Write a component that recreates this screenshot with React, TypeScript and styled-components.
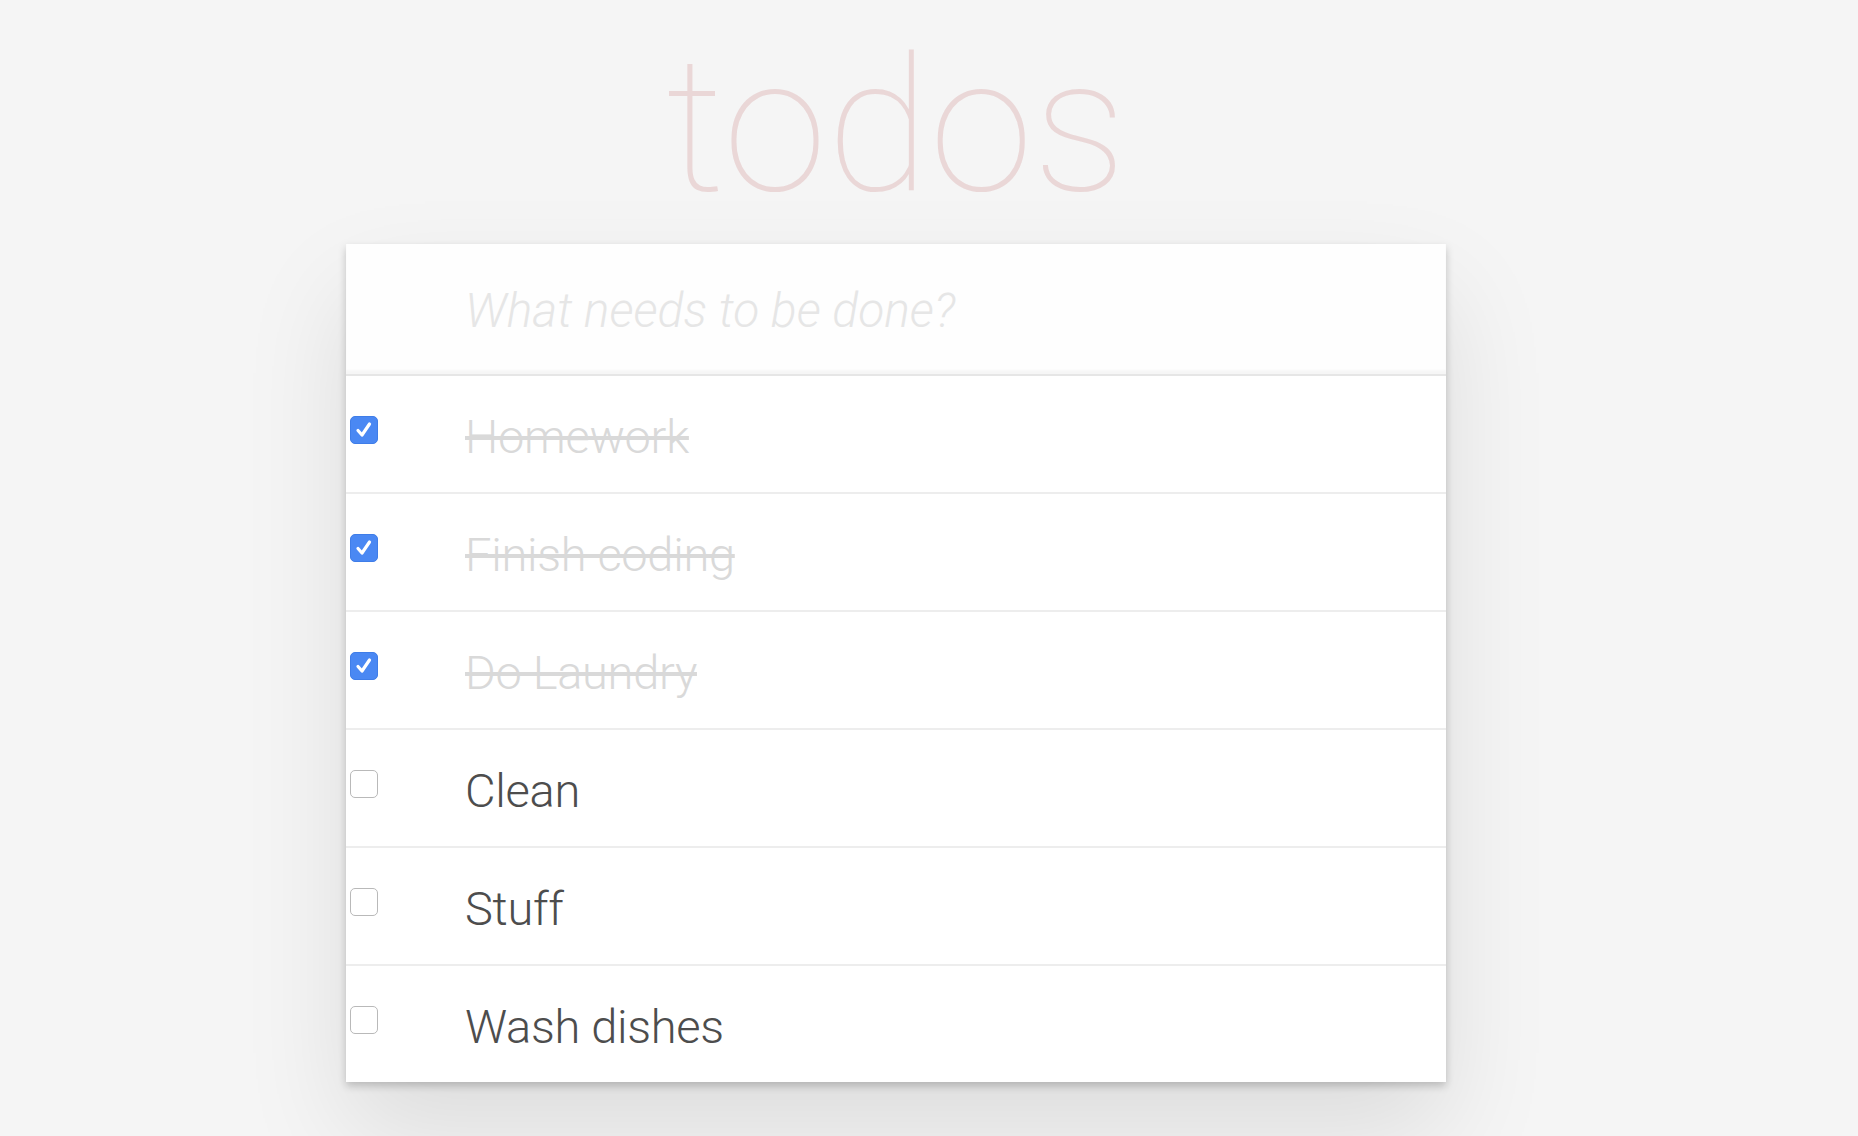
import React from "react";
import styled, { createGlobalStyle } from "styled-components";

const GlobalStyle = createGlobalStyle`
  html, body {
    margin: 0;
    padding: 0;
    background: #f5f5f5;
  }
  body {
    font-family: Roboto, "Helvetica Neue", "Liberation Sans", sans-serif;
    font-weight: 300;
    color: #4d4d4d;
    -webkit-font-smoothing: antialiased;
  }
`;

const Page = styled.div`
  min-height: 1136px;
  display: flex;
  flex-direction: column;
  align-items: center;
  padding-right: 66px;
`;

const Title = styled.h1`
  margin: 0;
  padding-top: 32px;
  margin-bottom: 24px;
  height: 188px;
  font-size: 188px;
  line-height: 1;
  font-weight: 100;
  color: rgba(175, 47, 47, 0.15);
  text-align: center;
`;

const Card = styled.section`
  width: 1100px;
  background: #fff;
  box-shadow: 0 4px 8px 0 rgba(0, 0, 0, 0.2), 0 50px 100px 0 rgba(0, 0, 0, 0.1);
`;

const NewTodo = styled.input`
  display: block;
  box-sizing: border-box;
  width: 100%;
  height: 130px;
  margin: 0;
  padding: 2px 32px 0 119px;
  border: none;
  outline: none;
  background: rgba(0, 0, 0, 0.003);
  box-shadow: inset 0 -4px 2px rgba(0, 0, 0, 0.03);
  font-family: inherit;
  font-size: 48px;
  font-weight: 300;
  color: #4d4d4d;

  &::placeholder {
    font-style: italic;
    font-weight: 300;
    color: #e6e6e6;
  }
`;

const List = styled.ul`
  margin: 0;
  padding: 0;
  list-style: none;
  border-top: 2px solid #e6e6e6;
`;

const Item = styled.li`
  display: grid;
  grid-template-columns: 119px 1fr;
  align-items: center;
  height: 116px;
  border-bottom: 2px solid #ededed;

  &:last-child {
    border-bottom: none;
  }
`;

const Box = styled.span<{ $checked: boolean }>`
  display: flex;
  align-items: center;
  justify-content: center;
  box-sizing: border-box;
  width: 28px;
  height: 28px;
  margin: 0 0 8px 4px;
  border-radius: 5px;
  background: ${(p) => (p.$checked ? "#4a88f3" : "#fff")};
  border: 1px solid ${(p) => (p.$checked ? "#3f7de8" : "#b9b9b9")};
`;

const Label = styled.label<{ $done: boolean }>`
  padding-top: 6px;
  font-size: 47px;
  line-height: 1.2;
  font-weight: 300;
  letter-spacing: -0.3px;
  color: ${(p) => (p.$done ? "#d9d9d9" : "#4d4d4d")};
  text-decoration: ${(p) => (p.$done ? "line-through" : "none")};
  text-decoration-thickness: 4px;
  white-space: nowrap;
`;

const todos = [
  { text: "Homework", done: true },
  { text: "Finish coding", done: true },
  { text: "Do Laundry", done: true },
  { text: "Clean", done: false },
  { text: "Stuff", done: false },
  { text: "Wash dishes", done: false },
];

function Check() {
  return (
    <svg width="22" height="22" viewBox="0 0 22 22" fill="none">
      <path
        d="M5 11.5 L9 16 L16.5 5"
        stroke="#fff"
        strokeWidth="3.2"
        strokeLinecap="round"
        strokeLinejoin="round"
      />
    </svg>
  );
}

export default function App() {
  return (
    <Page>
      <GlobalStyle />
      <Title>todos</Title>
      <Card>
        <NewTodo placeholder="What needs to be done?" readOnly />
        <List>
          {todos.map((t) => (
            <Item key={t.text}>
              <Box $checked={t.done}>{t.done && <Check />}</Box>
              <Label $done={t.done}>{t.text}</Label>
            </Item>
          ))}
        </List>
      </Card>
    </Page>
  );
}
